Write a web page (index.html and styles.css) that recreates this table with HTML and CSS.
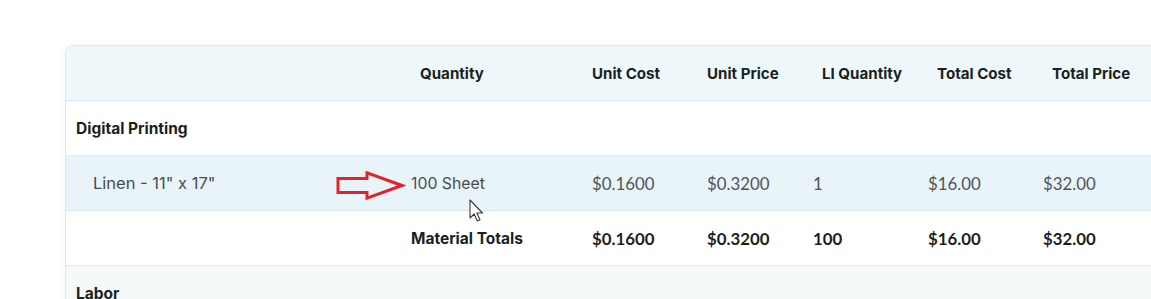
FILE: index.html
```html
<!DOCTYPE html>
<html lang="en">
<head>
<meta charset="utf-8">
<title>Materials</title>
<link rel="stylesheet" href="styles.css">
</head>
<body>
<div class="page">
  <div class="card">
    <div class="head">
      <div class="hcell"></div>
      <div class="hcell">Quantity</div>
      <div class="hcell">Unit Cost</div>
      <div class="hcell">Unit Price</div>
      <div class="hcell">LI Quantity</div>
      <div class="hcell">Total Cost</div>
      <div class="hcell">Total Price</div>
    </div>
    <div class="row group">
      <div class="cell label">Digital Printing</div>
    </div>
    <div class="row item">
      <div class="cell name">Linen - 11" x 17"</div>
      <div class="cell text">100 Sheet</div>
      <div class="cell num">$0.1600</div>
      <div class="cell num">$0.3200</div>
      <div class="cell num">1</div>
      <div class="cell num">$16.00</div>
      <div class="cell num">$32.00</div>
    </div>
    <div class="row totals">
      <div class="cell"></div>
      <div class="cell label">Material Totals</div>
      <div class="cell num strong">$0.1600</div>
      <div class="cell num strong">$0.3200</div>
      <div class="cell num strong">100</div>
      <div class="cell num strong">$16.00</div>
      <div class="cell num strong">$32.00</div>
    </div>
    <div class="row group alt">
      <div class="cell label">Labor</div>
    </div>
  </div>

  <svg class="pointer-arrow" width="70" height="30" viewBox="0 0 70 30" aria-hidden="true">
    <path d="M2 7.5 H31 V1.8 L66 14.5 L31 27.2 V21.5 H2 Z" fill="none" stroke="#e5212b" stroke-width="3" stroke-linejoin="miter"/>
  </svg>
  <svg class="cursor" width="16" height="24" viewBox="0 0 16 24" aria-hidden="true">
    <path d="M1 1 V19 L5.2 15 L8.3 22 L11 20.8 L7.9 14 H13.5 Z" fill="#fff" stroke="#3a3a3a" stroke-width="1.1" stroke-linejoin="round"/>
  </svg>
</div>
</body>
</html>
```
FILE: styles.css
```css
html, body {
  margin: 0;
  padding: 0;
  background: #ffffff;
  overflow: hidden;
}

.page {
  position: relative;
  padding: 45px 0 0 65px;
  width: 1200px;
  font-family: "Inter", "Noto Sans", sans-serif;
  color: #1d2125;
}

.card {
  width: 1160px;
  border: 1px solid #d7ebf1;
  border-right: none;
  border-radius: 8px 0 0 0;
  box-shadow: 0 0 6px rgba(30, 80, 100, 0.06);
  overflow: hidden;
  background: #fff;
}

.head {
  display: grid;
  grid-template-columns: 344px 172px 115px 115px 115px 115px 1fr;
  height: 55px;
  box-sizing: border-box;
  background: #eef8fb;
  border-bottom: 1px solid #d6eaf0;
  align-items: center;
}

.hcell {
  padding-left: 10px;
  font-size: 15.1px;
  font-weight: 700;
  color: #1b1f23;
  white-space: nowrap;
}

.row {
  display: grid;
  grid-template-columns: 335px 181px 115px 106px 115px 115px 1fr;
  height: 55px;
  box-sizing: border-box;
  border-bottom: 1px solid #e1ecf0;
  align-items: center;
}

.row.group {
  grid-template-columns: 1fr;
}

.row.item {
  background: #e9f4f8;
  border-bottom-color: #d9e8ee;
}

.row.alt {
  background: #f6f9fa;
}

.cell {
  padding-left: 10px;
  white-space: nowrap;
}

.label {
  font-size: 15.5px;
  font-weight: 700;
  color: #1b1f23;
}

.name {
  padding-left: 27px;
  font-size: 16.5px;
  color: #474c52;
}

.text {
  font-size: 15.8px;
  color: #474c52;
}

.num {
  font-family: "Lato", "Noto Sans", sans-serif;
  font-size: 16.8px;
  color: #50555b;
}

.num.strong {
  font-weight: 700;
  color: #1b1f23;
}

.pointer-arrow {
  position: absolute;
  left: 336px;
  top: 171px;
}

.cursor {
  position: absolute;
  left: 469px;
  top: 199px;
}
```
